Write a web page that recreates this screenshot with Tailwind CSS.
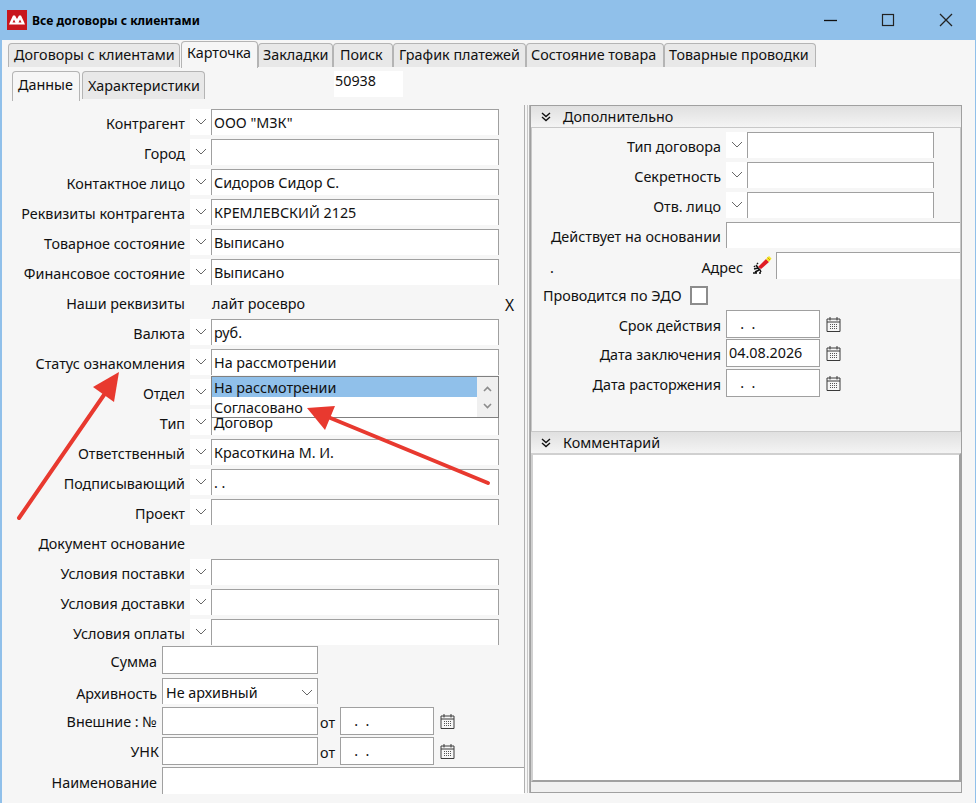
<!DOCTYPE html>
<html lang="ru">
<head>
  <meta charset="UTF-8" />
  <title>Все договоры с клиентами</title>
  <script src="https://cdn.jsdelivr.net/npm/@tailwindcss/browser@4"></script>
</head>
<body class="relative w-[976px] h-[803px] overflow-hidden bg-[#90c0ea] font-['Noto_Sans',sans-serif] text-[14.35px] leading-[20px] text-[#111]">

  <!-- title bar -->
  <div class="h-10 flex items-center pl-[7px]">
    <svg class="w-5 h-5" viewBox="0 0 20 20"><rect width="20" height="20" fill="#c8161d"/><path fill-rule="evenodd" d="M2 14.5 L3 12 L6 5.5 L8 5.5 L10 9 L12 5.5 L14 5.5 L17 12 L18 14.5Z M5.5 12.5 H8.5 L7 9.5Z M11.5 12.5 H14.5 L13 9.5Z" fill="#fff"/></svg>
    <span class="ml-[5px] mt-[2px] text-[12.1px] font-bold text-black">Все договоры с клиентами</span>
    <div class="ml-auto flex items-center mr-[2px]">
      <svg class="w-[58px] h-4" viewBox="0 0 58 16"><path d="M23 8.5 H36" stroke="#111" stroke-width="1.3"/></svg>
      <svg class="w-[58px] h-4" viewBox="0 0 58 16"><rect x="23.5" y="2.5" width="11" height="11" fill="none" stroke="#222" stroke-width="1.2"/></svg>
      <svg class="w-[58px] h-4 mr-[-1px]" viewBox="0 0 58 16"><path d="M23 2 L35 14 M35 2 L23 14" stroke="#222" stroke-width="1.3"/></svg>
    </div>
  </div>

  <!-- client area -->
  <div class="ml-[2px] mr-[1px] h-[763px] bg-[#f6f6f6] flex flex-col">
    <!-- main tabs -->
    <div class="h-[27px] pl-[6px] pt-[2px] flex items-stretch">
      <div class="w-[172px] mt-px pl-[5px] pt-px bg-[#e8e8e8] border border-b-0 border-[#b4b4b4] rounded-t-[4px]">Договоры с клиентами</div>
      <div class="w-[77px] ml-px -mt-px pl-[5px] pt-px h-[27px] bg-[#f6f6f6] border border-b-0 border-[#b4b4b4] rounded-t-[4px]">Карточка</div>
      <div class="w-[75px] mt-px pl-[4px] pt-px bg-[#e8e8e8] border border-b-0 border-[#b4b4b4] rounded-t-[4px]">Закладки</div>
      <div class="w-[60px] mt-px pl-[6px] pt-px bg-[#e8e8e8] border border-b-0 border-[#b4b4b4] rounded-t-[4px]">Поиск</div>
      <div class="w-[133px] mt-px pl-[5px] pt-px bg-[#e8e8e8] border border-b-0 border-[#b4b4b4] rounded-t-[4px]">График платежей</div>
      <div class="w-[138px] mt-px pl-[4px] pt-px bg-[#e8e8e8] border border-b-0 border-[#b4b4b4] rounded-t-[4px]">Состояние товара</div>
      <div class="w-[152px] mt-px pl-[4px] pt-px bg-[#e8e8e8] border border-b-0 border-[#b4b4b4] rounded-t-[4px]">Товарные проводки</div>
    </div>
    <!-- sub tabs -->
    <div class="h-[38px] pl-[10px] pt-[4px] flex items-start">
      <div class="w-[68px] h-[30px] pl-[5px] pt-[3px] border border-b-0 border-[#b4b4b4] rounded-t-[4px]">Данные</div>
      <div class="w-[123px] h-[28px] ml-[2px] pl-[5px] pt-[4px] bg-[#e8e8e8] border border-b-0 border-[#b4b4b4] rounded-t-[4px]">Характеристики</div>
      <div class="w-[69px] h-[26px] ml-[129px] pl-px bg-white">50938</div>
    </div>

    <div class="flex h-[688px]">
      <!-- left column -->
      <div id="left" class="w-[522px] pt-[4px] flex flex-col"></div>

      <!-- splitter -->
      <div class="w-[6px] flex justify-between">
        <div class="w-px bg-[#b0b0b0]"></div><div class="w-px bg-[#c8c8c8]"></div><div class="w-px bg-[#b0b0b0]"></div>
      </div>

      <!-- right panel -->
      <div class="w-[432px] border border-[#a0a0a0] bg-[#f0f0f0] flex flex-col">
        <div class="h-[21px] flex items-center bg-gradient-to-b from-[#e0e0e0] to-[#f4f4f4]">
          <svg class="ml-[10px] w-[10px] h-[10px]" viewBox="0 0 10 10"><path d="M1 1 L5 4.5 L9 1 M1 5 L5 8.5 L9 5" fill="none" stroke="#111" stroke-width="1.4"/></svg>
          <span class="ml-[12px]">Дополнительно</span>
        </div>
        <div id="extra" class="h-[305px] border border-[#c8c8c8] bg-[#f6f6f6] pt-[4px] flex flex-col overflow-hidden"></div>
        <div class="h-[21px] flex items-center bg-gradient-to-b from-[#e0e0e0] to-[#f4f4f4]">
          <svg class="ml-[10px] w-[10px] h-[10px]" viewBox="0 0 10 10"><path d="M1 1 L5 4.5 L9 1 M1 5 L5 8.5 L9 5" fill="none" stroke="#111" stroke-width="1.4"/></svg>
          <span class="ml-[12px]">Комментарий</span>
        </div>
        <div class="h-[329px] border-2 border-[#a0a0a0] border-t-[#d0d0d0] border-l-[#d0d0d0] bg-white"></div>
      </div>
    </div>
  </div>

  <!-- open dropdown -->
  <div class="absolute left-[211px] top-[376px] w-[288px] h-[42px] border border-[#808080] bg-white flex">
    <div class="flex-1">
      <div class="h-5 pl-[2px] pt-px bg-[#90c0ea] leading-[19px]">На рассмотрении</div>
      <div class="h-5 pl-[2px] pt-px leading-[19px]">Согласовано</div>
    </div>
    <div class="w-[21px] bg-[#f0f0f0] flex flex-col items-center justify-around py-[3px]">
      <svg class="w-[9px] h-[6px]" viewBox="0 0 9 6"><path d="M1 5 L4.5 1.5 L8 5" fill="none" stroke="#8c8c8c" stroke-width="1.6"/></svg>
      <svg class="w-[9px] h-[6px]" viewBox="0 0 9 6"><path d="M1 1 L4.5 4.5 L8 1" fill="none" stroke="#8c8c8c" stroke-width="1.6"/></svg>
    </div>
  </div>

  <!-- red annotation arrows -->
  <svg class="absolute left-0 top-0 pointer-events-none" width="976" height="803" viewBox="0 0 976 803">
    <path d="M19 518 L106 392" stroke="#e8392f" stroke-width="4" stroke-linecap="round"/>
    <path d="M119 372 L93 387 L114 402Z" fill="#e8392f"/>
    <path d="M488 483 L328 417" stroke="#e8392f" stroke-width="4" stroke-linecap="round"/>
    <path d="M307 408 L335 406 L325 430Z" fill="#e8392f"/>
  </svg>

  <script>
    const chevron = '<svg class="w-[12px] h-[7px]" viewBox="0 0 12 7"><path d="M1 1 L6 6 L11 1" fill="none" stroke="#666" stroke-width="1"/></svg>';
    const calendar = '<svg class="w-[15px] h-[16px] ml-[6px] shrink-0" viewBox="0 0 15 16"><path d="M1 3 H14 V15.5 H1Z M1 6 H14" fill="none" stroke="#3a3a3a"/><path d="M4 1 V4.5 M11 1 V4.5" stroke="#3a3a3a"/><path d="M4 8.5 H12 M4 10.5 H12 M4 12.5 H12" stroke="#555" stroke-dasharray="1 1"/></svg>';

    function comboRow(label, value, labelW, inputW) {
      return `<div class="h-[26px] mb-[4px] flex shrink-0">
        <div class="text-right pt-[5px] shrink-0" style="width:${labelW}px">${label}</div>
        <div class="ml-[5px] w-[21px] bg-white flex justify-center pt-[9px] shrink-0">${chevron}</div>
        <div class="border border-b-0 border-[#a0a0a0] bg-white pl-[2px] pt-[3px] whitespace-pre shrink-0" style="width:${inputW}px">${value}</div>
      </div>`;
    }
    function dateBox(value) {
      return `<div class="w-[94px] h-[28px] border border-[#a0a0a0] bg-white pl-[2px] pt-[3px] whitespace-pre shrink-0">${value}</div>`;
    }

    // left column
    const combos1 = [['Контрагент','ООО "МЗК"'],['Город',''],['Контактное лицо','Сидоров Сидор С.'],['Реквизиты контрагента','КРЕМЛЕВСКИЙ 2125'],['Товарное состояние','Выписано'],['Финансовое состояние','Выписано']];
    const combos2 = [['Валюта','руб.'],['Статус ознакомления','На рассмотрении'],['Отдел',''],['Тип','Договор'],['Ответственный','Красоткина М. И.'],['Подписывающий','. .'],['Проект','']];
    const combos3 = [['Условия поставки',''],['Условия доставки',''],['Условия оплаты','']];
    let html = combos1.map(r => comboRow(r[0], r[1], 183, 288)).join('');
    html += `<div class="h-[26px] mb-[4px] flex shrink-0"><div class="w-[183px] text-right pt-[5px]">Наши реквизиты</div><div class="ml-[27px] w-[293px] pt-[5px]">лайт росевро</div><div class="pt-[6px] text-[15.5px]">X</div></div>`;
    html += combos2.map(r => comboRow(r[0], r[1], 183, 288)).join('');
    html += `<div class="h-[26px] mb-[4px] flex shrink-0"><div class="w-[183px] text-right pt-[5px]">Документ основание</div></div>`;
    html += combos3.map(r => comboRow(r[0], r[1], 183, 288)).join('');
    html += `<div class="-mt-[3px] h-[28px] flex shrink-0"><div class="w-[155px] text-right pt-[6px]">Сумма</div><div class="ml-[5px] w-[156px] border border-[#a0a0a0] bg-white"></div></div>
      <div class="mt-[4px] h-[26px] flex shrink-0"><div class="w-[155px] text-right pt-[6px]">Архивность</div><div class="ml-[5px] w-[156px] border border-b-0 border-[#a0a0a0] bg-white pl-[3px] pt-[4px] flex justify-between pr-[4px]"><span>Не архивный</span><span class="pt-[6px]">${chevron}</span></div></div>
      <div class="mt-[3px] h-[28px] flex items-stretch shrink-0"><div class="w-[155px] text-right pt-[5px]">Внешние : №</div><div class="ml-[5px] w-[156px] border border-[#a0a0a0] bg-white"></div><div class="w-[22px] pl-[2px] pt-[6px]">от</div>${dateBox('   .  .')}<div class="flex items-center">${calendar}</div></div>
      <div class="mt-[2px] h-[28px] flex items-stretch shrink-0"><div class="w-[157px] text-right pt-[5px]">УНК</div><div class="ml-[3px] w-[156px] border border-[#a0a0a0] bg-white"></div><div class="w-[22px] pl-[2px] pt-[6px]">от</div>${dateBox('   .  .')}<div class="flex items-center">${calendar}</div></div>
      <div class="mt-[2px] h-[27px] flex shrink-0"><div class="w-[155px] text-right pt-[6px]">Наименование</div><div class="ml-[5px] flex-1 border border-b-0 border-r-0 border-[#a0a0a0] bg-white"></div></div>`;
    document.getElementById('left').innerHTML = html;

    // right panel "Дополнительно"
    let extra = [['Тип договора'],['Секретность'],['Отв. лицо']].map(r => comboRow(r[0], '', 189, 187)).join('');
    extra += `<div class="h-[26px] mb-[4px] flex shrink-0"><div class="w-[189px] text-right pt-[5px] whitespace-nowrap">Действует на основании</div><div class="ml-[5px] flex-1 border border-b-0 border-r-0 border-[#a0a0a0] bg-white"></div></div>
      <div class="h-[27px] flex shrink-0"><div class="ml-[18px] w-[50px] pt-[6px]">.</div><div class="w-[143px] text-right pt-[6px]">Адрес</div>
        <svg class="ml-[9px] mt-[3px] w-[20px] h-[20px] shrink-0" viewBox="0 0 20 20"><path d="M6 12 L14 4 L17 7 L9 14Z" fill="#e01c24"/><path d="M14 4 L17 1 L19.5 3.5 L17 7Z" fill="#f6e627"/><path d="M15.5 2.5 L18 5" stroke="#c9a400"/><path d="M4 10 L6 13 L8 15 L9 17 M2 14 L6 13 M3 17 L7 15 M1 18 L5 18 M5 8 L6 9 M2 11 L3 12 M7 18 L9 18" fill="none" stroke="#111" stroke-width="1.5"/></svg>
        <div class="ml-[4px] flex-1 border border-b-0 border-r-0 border-t border-[#a0a0a0] bg-white"></div></div>
      <div class="mt-[7px] h-[19px] flex shrink-0"><div class="w-[151px] pl-[11px] whitespace-nowrap">Проводится по ЭДО</div><div class="ml-[7px] w-[18px] h-[19px] border-2 border-[#8c8c8c] bg-white"></div></div>
      <div class="mt-[5px] h-[28px] flex shrink-0"><div class="w-[189px] text-right pt-[6px]">Срок действия</div><div class="w-[5px]"></div>${dateBox('   .  .')}<div class="flex items-center">${calendar}</div></div>
      <div class="mt-[1px] h-[28px] flex shrink-0"><div class="w-[189px] text-right pt-[6px]">Дата заключения</div><div class="w-[5px]"></div>${dateBox('04.08.2026')}<div class="flex items-center">${calendar}</div></div>
      <div class="mt-[2px] h-[28px] flex shrink-0"><div class="w-[189px] text-right pt-[6px]">Дата расторжения</div><div class="w-[5px]"></div>${dateBox('   .  .')}<div class="flex items-center">${calendar}</div></div>`;
    document.getElementById('extra').innerHTML = extra;
  </script>
</body>
</html>
